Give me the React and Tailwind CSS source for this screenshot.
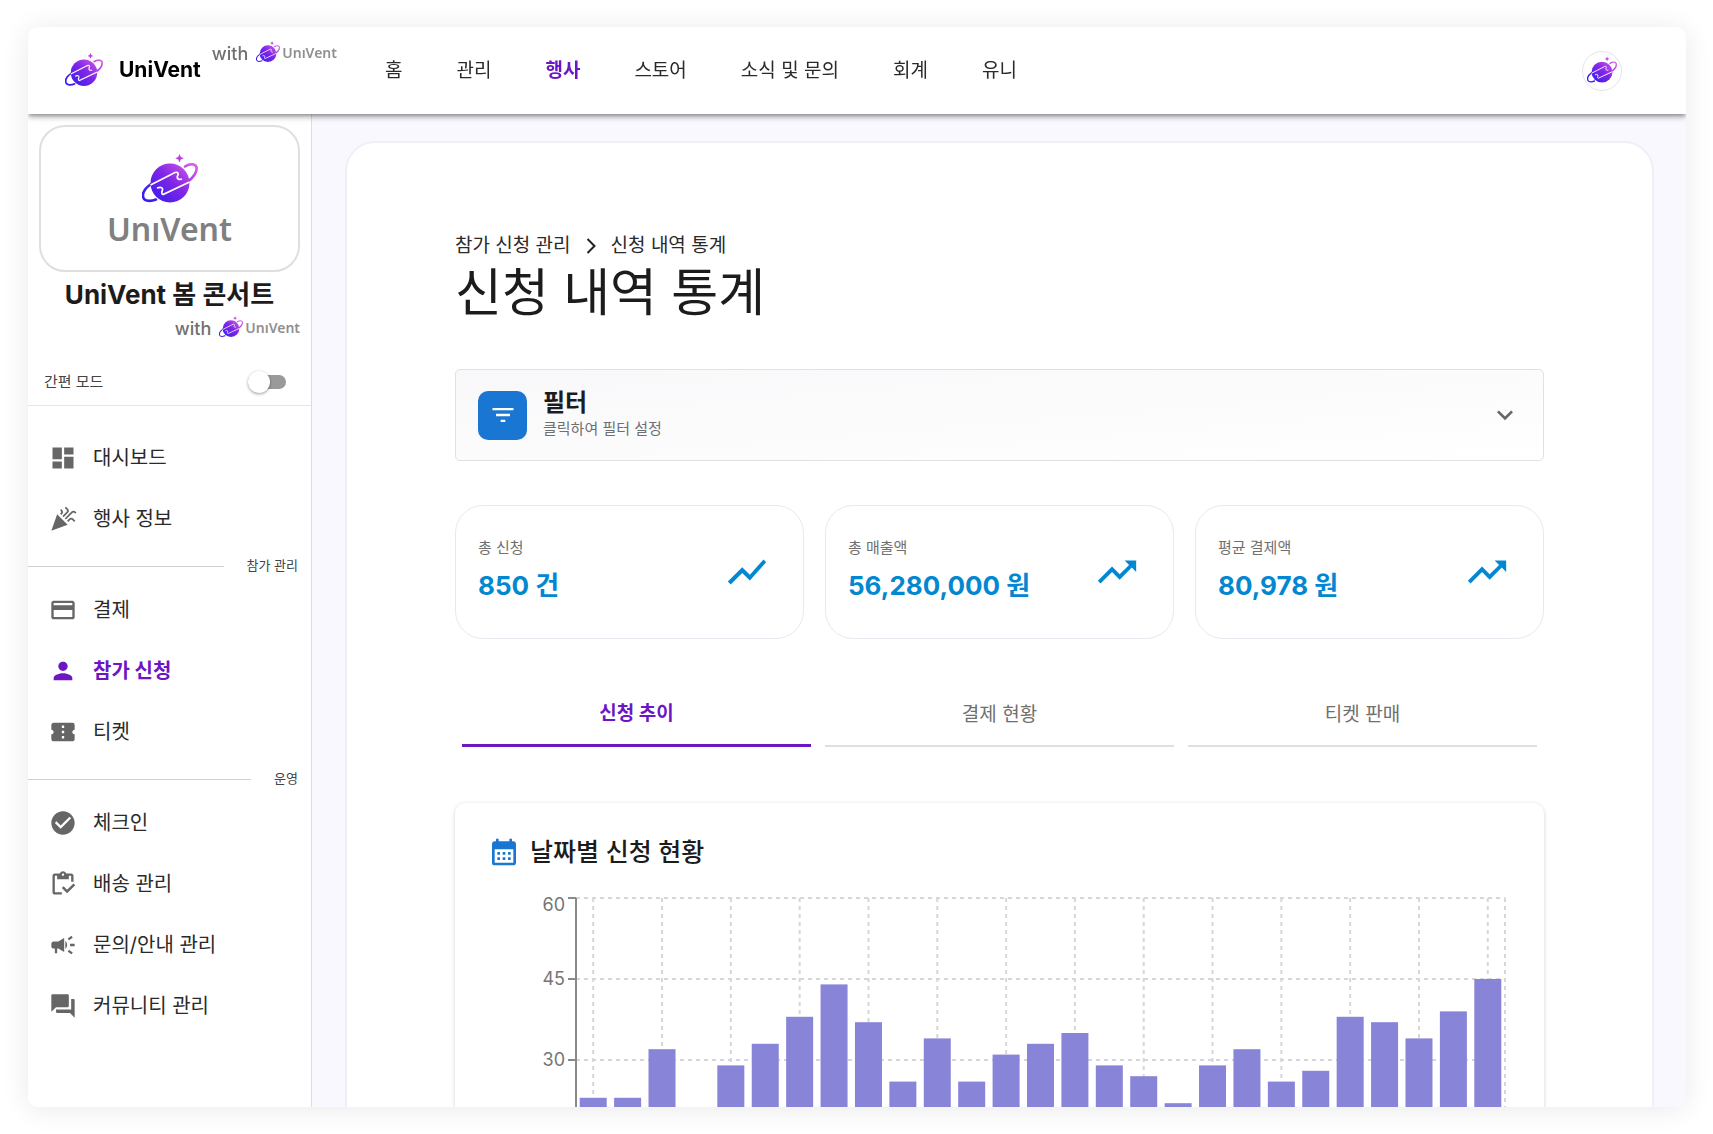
import { useId, useState } from 'react';
import {
  MdCalendarMonth,
  MdCampaign,
  MdCelebration,
  MdCheckCircle,
  MdConfirmationNumber,
  MdDashboard,
  MdExpandMore,
  MdFilterList,
  MdForum,
  MdOutlineCreditCard,
  MdOutlineInventory,
  MdPerson,
  MdShowChart,
  MdTrendingUp,
} from 'react-icons/md';

const topMenu = ['홈', '관리', '행사', '스토어', '소식 및 문의', '회계', '유니'];

const sideMenu = [
  {
    items: [
      { name: '대시보드', icon: MdDashboard },
      { name: '행사 정보', icon: MdCelebration },
    ],
  },
  {
    title: '참가 관리',
    items: [
      { name: '결제', icon: MdOutlineCreditCard },
      { name: '참가 신청', icon: MdPerson },
      { name: '티켓', icon: MdConfirmationNumber },
    ],
  },
  {
    title: '운영',
    items: [
      { name: '체크인', icon: MdCheckCircle },
      { name: '배송 관리', icon: MdOutlineInventory },
      { name: '문의/안내 관리', icon: MdCampaign },
      { name: '커뮤니티 관리', icon: MdForum },
    ],
  },
];

const stats = [
  { label: '총 신청', value: '850 건', icon: MdShowChart },
  { label: '총 매출액', value: '56,280,000 원', icon: MdTrendingUp },
  { label: '평균 결제액', value: '80,978 원', icon: MdTrendingUp },
];

const tabs = ['신청 추이', '결제 현황', '티켓 판매'];

const dailyCounts = [
  23, 23, 32, 18, 29, 33, 38, 44, 37, 26, 34, 26, 31, 33, 35, 29, 27, 22, 29, 32, 26, 28, 38, 37,
  34, 39, 45,
];

const PlanetLogo = ({ className }) => {
  const id = useId();
  return (
    <svg viewBox="0 0 56 50" className={className} fill="none" aria-hidden="true">
      <defs>
        <linearGradient id={id} x1="10" y1="46" x2="46" y2="6" gradientUnits="userSpaceOnUse">
          <stop offset="0" stopColor="#3a1cf0" />
          <stop offset="0.5" stopColor="#8026e6" />
          <stop offset="1" stopColor="#d65ce8" />
        </linearGradient>
      </defs>
      <circle cx="28" cy="29" r="19.5" fill={`url(#${id})`} />
      <path
        d="M9 30C2 35 0 40 1.500 44C3 47.500 9 47.500 14 45.500"
        stroke={`url(#${id})`}
        strokeWidth="2.600"
        strokeLinecap="round"
      />
      <path
        d="M43 12.500C48 9.500 53 9.500 54.500 13C55.500 18 51 24 46 27.500"
        stroke={`url(#${id})`}
        strokeWidth="2.600"
        strokeLinecap="round"
      />
      <path
        d="M8.500 31L33 18.500C36 17.500 37 20 35.500 22C34.500 25 37 26 40 25"
        stroke="#fff"
        strokeWidth="1.700"
      />
      <path
        d="M47.500 28L21 40.500C19 40 20 37.500 20.500 36C21 33 18 33 15 34"
        stroke="#fff"
        strokeWidth="1.700"
      />
      <path
        d="M37.500 0L38.800 3L41.800 4.300L38.800 5.600L37.500 8.600L36.200 5.600L33.200 4.300L36.200 3Z"
        fill="#b93fe0"
      />
    </svg>
  );
};

const PoweredBy = () => (
  <div className="flex h-6 items-center">
    <span className="pt-1 text-[18px] font-medium leading-6 text-[#707070]">with</span>
    <PlanetLogo className="ml-2 h-[22px] w-6" />
    <span className="ml-[2px] font-['Noto_Sans',sans-serif] text-[14px] font-semibold text-[#8f8f8f]">
      UnıVent
    </span>
  </div>
);

const Header = () => {
  const [active, setActive] = useState('행사');

  return (
    <header className="relative z-10 flex h-[87px] shrink-0 items-center bg-white pl-[37px] pr-16 shadow-[0_2px_4px_-1px_rgba(0,0,0,0.35),0_4px_5px_rgba(0,0,0,0.16),0_1px_10px_rgba(0,0,0,0.12)]">
      <PlanetLogo className="mb-[2px] h-[34px] w-[38px]" />
      <span className="mb-[2px] ml-4 text-[21px] font-bold leading-8 text-black">UniVent</span>
      <div className="ml-[11px] mt-[13px] self-start">
        <PoweredBy />
      </div>
      <nav className="ml-12 flex gap-[54px]">
        {topMenu.map((name) => (
          <a
            key={name}
            href="#"
            onClick={() => setActive(name)}
            className={`whitespace-nowrap text-[19px] leading-7 ${
              active === name ? 'font-bold text-[#6d16c4]' : 'text-[#2a2a2a]'
            }`}
          >
            {name}
          </a>
        ))}
      </nav>
      <button
        aria-label="프로필"
        className="ml-auto flex size-10 items-center justify-center rounded-full border border-[#e4e4ee] bg-white pb-[2px]"
      >
        <PlanetLogo className="h-7 w-[30px]" />
      </button>
    </header>
  );
};

const Sidebar = () => {
  const [active, setActive] = useState('참가 신청');
  const [simple, setSimple] = useState(false);

  return (
    <aside className="w-[284px] shrink-0 border-r border-[#dcdce2] bg-white">
      {/* Event */}
      <div className="px-[11px] pt-[11px]">
        <div className="flex h-[147px] flex-col items-center justify-center rounded-[26px] border-2 border-[#dfdfe3] pt-2">
          <PlanetLogo className="h-[50px] w-14" />
          <span className="pt-[2px] font-['Noto_Sans',sans-serif] text-[32px] font-semibold leading-[46px] text-[#808080]">
            UnıVent
          </span>
        </div>
        <h2 className="mt-[5px] text-center text-[26px] font-bold leading-9 text-[#1c1c1c]">
          UniVent 봄 콘서트
        </h2>
        <div className="mt-[2px] flex justify-end">
          <PoweredBy />
        </div>
      </div>

      {/* Simple mode */}
      <label className="mt-5 flex h-[47px] cursor-pointer items-center justify-between border-b border-[#e4e4ec] pl-4 pr-[25px] text-[15px] text-[#444]">
        간편 모드
        <input
          type="checkbox"
          checked={simple}
          onChange={(e) => setSimple(e.target.checked)}
          className="peer sr-only"
        />
        <span className="flex h-[14px] w-[38px] items-center rounded-full bg-[#9a9a9a] peer-checked:justify-end peer-checked:bg-[#b388e5]">
          <span className="size-[22px] shrink-0 rounded-full bg-white shadow-[0_1px_3px_rgba(0,0,0,0.4)]" />
        </span>
      </label>

      {/* Menu */}
      <nav className="pt-[21px]">
        {sideMenu.map((section, i) => (
          <div key={i}>
            {section.title && (
              <div className="flex h-[30px] items-center gap-[23px] pr-[13px] pt-1">
                <span className="h-px flex-1 bg-[#cfcfcf]" />
                <span className="text-[13px] text-[#444]">{section.title}</span>
              </div>
            )}
            {section.items.map(({ name, icon: Icon }) => (
              <a
                key={name}
                href="#"
                onClick={() => setActive(name)}
                className={`flex h-[61px] items-center gap-4 pl-[21px] text-[20px] ${
                  active === name ? 'font-bold text-[#6d16c4]' : 'text-[#2a2a2a]'
                }`}
              >
                <Icon
                  className={`size-7 ${active === name ? 'text-[#6d16c4]' : 'text-[#666]'}`}
                />
                {name}
              </a>
            ))}
          </div>
        ))}
      </nav>
    </aside>
  );
};

const StatCard = ({ label, value, icon: Icon }) => (
  <div className="flex h-[134px] items-center justify-between rounded-[28px] border border-[#e8e8f0] bg-white pl-[22px] pr-[33px]">
    <div className="pb-[2px]">
      <p className="text-[15px] leading-6 text-[#6f6f6f]">{label}</p>
      <p className="mt-[6px] text-[26px] font-bold leading-10 text-[#0288d1]">{value}</p>
    </div>
    <Icon className="size-[46px] text-[#0288d1]" />
  </div>
);

const DailyChart = () => {
  const left = 88;
  const right = 1017;
  const top = 10;
  const unit = 5.4;
  const bottom = top + 60 * unit;
  const slot = (right - left) / dailyCounts.length;
  const center = (i) => left + slot * (i + 0.5);
  const columns = dailyCounts.map((_, i) => i).filter((i) => i % 2 === 0);

  return (
    <svg viewBox="0 0 1023 360" className="w-full" role="img" aria-label="날짜별 신청 현황">
      <g stroke="#d6d6dc" strokeWidth="2" strokeDasharray="4 4">
        {[60, 45, 30, 15].map((v) => (
          <line key={v} x1={left} x2={right} y1={bottom - v * unit} y2={bottom - v * unit} />
        ))}
        {columns.map((i) => (
          <line key={i} x1={center(i)} x2={center(i)} y1={top} y2={bottom} />
        ))}
        <line x1={right} x2={right} y1={top} y2={bottom} />
      </g>
      <g stroke="#8a8a8a" strokeWidth="2">
        <line x1={left} x2={left} y1={top} y2={bottom} />
        {[60, 45, 30, 15].map((v) => (
          <line key={v} x1={left - 8} x2={left} y1={bottom - v * unit} y2={bottom - v * unit} />
        ))}
      </g>
      <g fill="#757575" fontSize="18" textAnchor="end">
        {[60, 45, 30].map((v) => (
          <text key={v} x={left - 11} y={bottom - v * unit + (v === 60 ? 13 : 6)}>
            {v}
          </text>
        ))}
      </g>
      {dailyCounts.map((v, i) => (
        <rect
          key={i}
          x={center(i) - 13.5}
          y={bottom - v * unit}
          width="27"
          height={v * unit}
          fill="#8884d8"
        />
      ))}
    </svg>
  );
};

const App = () => {
  const [tab, setTab] = useState(tabs[0]);

  return (
    <div className="h-screen bg-white py-[27px] pl-7 pr-[27px] font-['Inter','Noto_Sans_CJK_KR',sans-serif]">
      <div className="flex h-full flex-col overflow-hidden rounded-[10px] bg-white shadow-[0_2px_28px_rgba(0,0,0,0.09)]">
        <Header />
        <div className="flex min-h-0 flex-1">
          <Sidebar />
          <main className="min-w-0 flex-1 overflow-y-auto bg-[#faf8ff] pl-[33px] pr-8 pt-[27px] [scrollbar-width:none]">
            <div className="rounded-t-[30px] border-2 border-[#efeff5] bg-white px-[108px] pt-[89px]">
              {/* Title */}
              <div className="flex items-center text-[19px] leading-7 text-[#2a2a2a]">
                <a href="#">참가 신청 관리</a>
                <svg viewBox="0 0 10 18" className="mx-[15px] h-[18px] w-[10px]" fill="none">
                  <path d="M1.500 2L8.500 9L1.500 16" stroke="#222" strokeWidth="2" />
                </svg>
                <span>신청 내역 통계</span>
              </div>
              <h1 className="text-[51px] leading-[66px] text-[#1c1c1c]">신청 내역 통계</h1>

              {/* Filter */}
              <button className="mt-[43px] flex h-[92px] w-full items-center rounded-[5px] border border-[#e0e0e6] bg-gradient-to-br from-[#f8f8fa] to-white px-[22px] text-left">
                <span className="flex size-[49px] items-center justify-center rounded-[10px] bg-[#1976d2]">
                  <MdFilterList className="size-7 text-white" />
                </span>
                <span className="ml-4">
                  <span className="block text-[24px] font-bold leading-7 text-[#1c1c1c]">필터</span>
                  <span className="block text-[15px] leading-6 text-[#6f6f6f]">
                    클릭하여 필터 설정
                  </span>
                </span>
                <MdExpandMore className="ml-auto size-8 text-[#666]" />
              </button>

              {/* Summary */}
              <div className="mt-11 grid grid-cols-3 gap-[21px]">
                {stats.map((stat) => (
                  <StatCard key={stat.label} {...stat} />
                ))}
              </div>

              {/* Tabs */}
              <div className="mt-[38px] grid grid-cols-3 gap-[14px] px-[7px]" role="tablist">
                {tabs.map((name) => (
                  <button
                    key={name}
                    role="tab"
                    aria-selected={tab === name}
                    onClick={() => setTab(name)}
                    className={`h-[70px] pt-2 text-[19px] ${
                      tab === name
                        ? 'border-b-3 border-[#6d16c4] font-bold text-[#6d16c4]'
                        : 'border-b-2 border-[#e0e0e0] text-[#6f6f6f]'
                    }`}
                  >
                    {name}
                  </button>
                ))}
              </div>

              {/* Chart */}
              <section className="mt-14 rounded-[11px] bg-white px-[33px] pb-9 pt-[29px] shadow-[0_1px_4px_rgba(0,0,0,0.18)]">
                <h3 className="flex items-center gap-[10px] text-[25px] font-medium leading-10 text-[#1c1c1c]">
                  <MdCalendarMonth className="size-8 text-[#1976d2]" />
                  날짜별 신청 현황
                </h3>
                <div className="mt-4">
                  <DailyChart />
                </div>
              </section>
            </div>
          </main>
        </div>
      </div>
    </div>
  );
};

export default App;
